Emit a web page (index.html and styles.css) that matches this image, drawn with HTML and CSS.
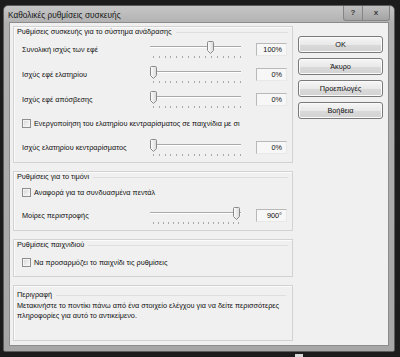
FILE: index.html
```html
<!DOCTYPE html>
<html lang="el">
<head>
  <meta charset="UTF-8">
  <meta name="viewport" content="width=device-width, initial-scale=1.0">
  <title>Καθολικές ρυθμίσεις συσκευής</title>
  <link rel="stylesheet" href="styles.css">
</head>
<body>
  <div class="window">
    <div class="titlebar">
      <span class="title">Καθολικές ρυθμίσεις συσκευής</span>
      <div class="caption-btns">
        <span class="cap cap-help">?</span>
        <span class="cap cap-close">x</span>
      </div>
    </div>

    <div class="client">
      <div class="main">
        <!-- Ρυθμίσεις ανάδρασης -->
        <div class="group">
          <div class="group-title"><span>Ρυθμίσεις συσκευής για το σύστημα ανάδρασης</span></div>
          <div class="row">
            <span class="row-label">Συνολική ισχύς των εφέ</span>
            <div class="slider">
              <div class="track"></div>
              <svg class="thumb" style="left:57px" width="7" height="13"><use href="#thumb"/></svg>
              <div class="ticks"></div>
            </div>
            <span class="value">100%</span>
          </div>
          <div class="row">
            <span class="row-label">Ισχύς εφέ ελατηρίου</span>
            <div class="slider">
              <div class="track"></div>
              <svg class="thumb" style="left:0px" width="7" height="13"><use href="#thumb"/></svg>
              <div class="ticks"></div>
            </div>
            <span class="value">0%</span>
          </div>
          <div class="row">
            <span class="row-label">Ισχύς εφέ απόσβεσης</span>
            <div class="slider">
              <div class="track"></div>
              <svg class="thumb" style="left:0px" width="7" height="13"><use href="#thumb"/></svg>
              <div class="ticks"></div>
            </div>
            <span class="value">0%</span>
          </div>
          <label class="check-row check-long">
            <span class="checkbox"></span>
            <span>Ενεργοποίηση του ελατηρίου κεντραρίσματος σε παιχνίδια με σι</span>
          </label>
          <div class="row">
            <span class="row-label">Ισχύς ελατηρίου κεντραρίσματος</span>
            <div class="slider">
              <div class="track"></div>
              <svg class="thumb" style="left:0px" width="7" height="13"><use href="#thumb"/></svg>
              <div class="ticks"></div>
            </div>
            <span class="value">0%</span>
          </div>
        </div>

        <!-- Τιμόνι -->
        <div class="group">
          <div class="group-title"><span>Ρυθμίσεις για το τιμόνι</span></div>
          <label class="check-row">
            <span class="checkbox"></span>
            <span>Αναφορά για τα συνδυασμένα πεντάλ</span>
          </label>
          <div class="row">
            <span class="row-label">Μοίρες περιστροφής</span>
            <div class="slider">
              <div class="track"></div>
              <svg class="thumb" style="left:83px" width="7" height="13"><use href="#thumb"/></svg>
              <div class="ticks ticks-dense"></div>
            </div>
            <span class="value">900°</span>
          </div>
        </div>

        <!-- Παιχνίδι -->
        <div class="group">
          <div class="group-title"><span>Ρυθμίσεις παιχνιδιού</span></div>
          <label class="check-row check-game">
            <span class="checkbox"></span>
            <span>Να προσαρμόζει το παιχνίδι τις ρυθμίσεις</span>
          </label>
        </div>

        <!-- Περιγραφή -->
        <div class="group group-desc">
          <div class="group-title"><span>Περιγραφή</span></div>
          <p class="desc">Μετακινήστε το ποντίκι πάνω από ένα στοιχείο ελέγχου για να δείτε περισσότερες πληροφορίες για αυτό το αντικείμενο.</p>
        </div>
      </div>

      <div class="buttons">
        <button class="btn">OK</button>
        <button class="btn">Άκυρο</button>
        <button class="btn">Προεπιλογές</button>
        <button class="btn">Βοήθεια</button>
      </div>
    </div>
  </div>

  <div class="taskbar-bit"></div>

  <svg class="defs" width="0" height="0">
    <defs>
      <linearGradient id="thumbFill" x1="0" y1="0" x2="1" y2="0">
        <stop offset="0" stop-color="#ffffff"/>
        <stop offset="1" stop-color="#d9d9d9"/>
      </linearGradient>
      <symbol id="thumb" viewBox="0 0 7 13">
        <path d="M1.5 0.5h4a1 1 0 0 1 1 1v8l-3 3-3-3v-8a1 1 0 0 1 1-1z" fill="url(#thumbFill)" stroke="#8a8a8a" stroke-width="1"/>
      </symbol>
    </defs>
  </svg>
</body>
</html>
```

FILE: styles.css
```css
* {
  margin: 0;
  padding: 0;
  box-sizing: border-box;
}

body {
  background-color: #1c1c1c;
  font-family: "Liberation Sans", Arial, sans-serif;
  font-size: 7.3px;
  color: #111111;
  overflow: hidden;
}

/* Παράθυρο */
.window {
  margin: 5px 0 0 3px;
  width: 392px;
  height: 347px;
  background: linear-gradient(#c6c6c6, #b0b0b0 18px, #a6a6a6);
  border: 1px solid #5c5c5c;
  border-radius: 5px 5px 2px 2px;
  padding: 0 5px 5px 5px;
  display: flex;
  flex-direction: column;
}

.titlebar {
  height: 16px;
  display: flex;
  align-items: flex-start;
}

.title {
  font-size: 8.3px;
  color: #161616;
  margin: 4px 0 0 -1px;
}

.caption-btns {
  margin-left: auto;
  margin-right: -1px;
  display: flex;
}

.cap {
  height: 15px;
  border: 1px solid #858585;
  border-top: none;
  background: linear-gradient(#c0c0c0, #a4a4a4);
  color: #3c3c3c;
  font-weight: bold;
  font-size: 8px;
  text-align: center;
  line-height: 14px;
}

.cap-help {
  width: 20px;
  border-radius: 0 0 0 3px;
}

.cap-close {
  width: 27px;
  border-left: none;
  border-radius: 0 0 3px 0;
}

/* Περιοχή περιεχομένου */
.client {
  flex: 1;
  background-color: #f0f0f0;
  border: 1px solid #8c8c8c;
  padding: 3px 4px 4px 3px;
  display: flex;
  gap: 5px;
}

.main {
  width: 280px;
  display: flex;
  flex-direction: column;
  gap: 8px;
}

.group {
  border: 1px solid #d2d2d2;
  box-shadow: inset 1px 1px 0 #fbfbfb;
  padding: 0 4px 2px 8px;
}

.group-title {
  height: 10px;
  line-height: 10px;
  margin-left: -5px;
  display: flex;
  align-items: center;
  gap: 4px;
  white-space: nowrap;
}

.group-title::after {
  content: "";
  flex: 1;
  border-top: 1px solid #dedede;
}

/* Γραμμές με slider */
.row {
  height: 25px;
  display: flex;
  align-items: center;
}

.row-label {
  width: 128px;
  white-space: nowrap;
}

.slider {
  width: 91px;
  height: 25px;
  position: relative;
}

.track {
  position: absolute;
  left: 0;
  right: 0;
  top: 9px;
  height: 2px;
  border-top: 1px solid #a9a9a9;
  border-bottom: 1px solid #ffffff;
}

.thumb {
  position: absolute;
  top: 4px;
  display: block;
}

.ticks {
  position: absolute;
  left: 3px;
  right: 0;
  top: 19px;
  height: 2px;
  background: repeating-linear-gradient(to right, #a8a8a8 0 1px, transparent 1px 5.8px);
}

.ticks-dense {
  background: repeating-linear-gradient(to right, #a8a8a8 0 1px, transparent 1px 5px);
}

.value {
  margin-left: 15px;
  width: 31px;
  height: 13px;
  border: 1px solid;
  border-color: #b9b9b9 #e8e8e8 #e8e8e8 #b9b9b9;
  background-color: #f7f7f7;
  text-align: right;
  padding-right: 4px;
  line-height: 11px;
}

/* Checkbox */
.check-row {
  height: 21px;
  display: flex;
  align-items: center;
  gap: 3px;
  white-space: nowrap;
}

.check-long {
  height: 23px;
}

.check-game {
  height: 24px;
}

.checkbox {
  flex: none;
  width: 9px;
  height: 9px;
  border: 1px solid #8e8e8e;
  background: linear-gradient(135deg, #d6d6d6, #fbfbfb);
  box-shadow: inset 0 0 0 1px #f4f4f4;
}

/* Περιγραφή */
.group-desc {
  flex: 1;
  padding: 4px 6px 0 3px;
}

.group-desc .group-title {
  margin-left: 0;
}

.desc {
  line-height: 10px;
  margin-top: 1px;
}

/* Κουμπιά */
.buttons {
  width: 85px;
  padding-top: 10px;
  display: flex;
  flex-direction: column;
  gap: 5px;
}

.btn {
  height: 17px;
  border: 1px solid #7a7a7a;
  border-radius: 3px;
  background: linear-gradient(#f6f6f6, #e9e9e9 50%, #dadada 51%, #d2d2d2);
  box-shadow: inset 0 0 0 1px #fbfbfb;
  font-family: inherit;
  font-size: 7.3px;
  color: #111111;
}

.taskbar-bit {
  margin: 2px 0 0 295px;
  width: 8px;
  height: 3px;
  background-color: #d8d8d8;
}

.defs {
  display: block;
  overflow: hidden;
}
```
